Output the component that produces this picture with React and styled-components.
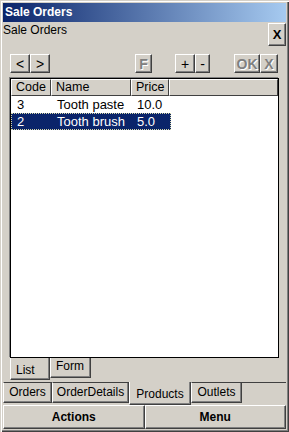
import React from 'react'
import styled, { createGlobalStyle } from 'styled-components'

const GlobalStyle = createGlobalStyle`
    html, body {
        margin: 0;
        padding: 0;
        background: #d4d0c8;
    }
    body {
        font-family: "Liberation Sans", Arial, sans-serif;
        font-size: 12px;
        color: #000;
    }
`

const products = [
    { code: '3', name: 'Tooth paste', price: '10.0' },
    { code: '2', name: 'Tooth brush', price: '5.0', selected: true },
]

const columns = [
    { title: 'Code', width: 40 },
    { title: 'Name', width: 80 },
    { title: 'Price', width: 38 },
]

const outerTabs = [
    { label: 'Orders', width: 49 },
    { label: 'OrderDetails', width: 77 },
    { label: 'Products', width: 62, active: true },
    { label: 'Outlets', width: 51 },
]

function App() {
    return (
        <>
            <GlobalStyle />
            <Window>
                <TitleBar>Sale Orders</TitleBar>
                <Client>
                    <HeaderRow>
                        <Caption>Sale Orders</Caption>
                        <CloseButton>X</CloseButton>
                    </HeaderRow>

                    <Toolbar>
                        <Group>
                            <ToolButton $w={20}>&lt;</ToolButton>
                            <ToolButton $w={20}>&gt;</ToolButton>
                        </Group>
                        <Group $ml={85}>
                            <ToolButton $w={17} disabled>F</ToolButton>
                        </Group>
                        <Group $ml={23}>
                            <ToolButton $w={20}>+</ToolButton>
                            <ToolButton $w={15}>-</ToolButton>
                        </Group>
                        <Group $ml={24}>
                            <ToolButton $w={26} disabled>OK</ToolButton>
                            <ToolButton $w={18} disabled>X</ToolButton>
                        </Group>
                    </Toolbar>

                    <Grid>
                        <GridHeader>
                            {columns.map(col => (
                                <HeaderCell key={col.title} $w={col.width}>{col.title}</HeaderCell>
                            ))}
                            <HeaderFiller />
                        </GridHeader>
                        <GridBody>
                            {products.map(p => (
                                <Row key={p.code} $selected={p.selected}>
                                    <Cell>{p.code}</Cell>
                                    <Cell>{p.name}</Cell>
                                    <Cell>{p.price}</Cell>
                                </Row>
                            ))}
                        </GridBody>
                    </Grid>

                    <InnerTabs>
                        <InnerTab $active>List</InnerTab>
                        <InnerTab>Form</InnerTab>
                    </InnerTabs>

                    <OuterTabs>
                        {outerTabs.map(t => (
                            <OuterTab key={t.label} $w={t.width} $active={t.active}>{t.label}</OuterTab>
                        ))}
                        <TabFiller />
                    </OuterTabs>

                    <ButtonBar>
                        <BarButton>Actions</BarButton>
                        <BarButton>Menu</BarButton>
                    </ButtonBar>
                </Client>
            </Window>
        </>
    )
}

export default App

const Window = styled.div`
    width: 289px;
    height: 432px;
    box-sizing: border-box;
    padding: 3px;
    display: flex;
    flex-direction: column;
    background: #d4d0c8;
    box-shadow: inset 1px 1px #d4d0c8, inset 2px 2px #fff,
        inset -1px -1px #404040, inset -2px -2px #808080;
`

const TitleBar = styled.div`
    height: 19px;
    line-height: 19px;
    padding-left: 2px;
    background: linear-gradient(to right, #0a246a, #a6caf0);
    color: #fff;
    font-weight: bold;
    font-size: 12px;
`

const Client = styled.div`
    flex: 1;
    display: flex;
    flex-direction: column;
    min-height: 0;
`

const HeaderRow = styled.div`
    height: 24px;
    display: flex;
    justify-content: space-between;
    align-items: flex-start;
`

const Caption = styled.div`
    font-size: 12px;
    line-height: 15px;
    padding-top: 1px;
`

const raised = `
    box-sizing: border-box;
    background: #d4d0c8;
    border: 1px solid;
    border-color: #fff #404040 #404040 #fff;
    box-shadow: inset -1px -1px #808080;
    font-family: "Liberation Sans", Arial, sans-serif;
    padding: 0;
    display: flex;
    align-items: center;
    justify-content: center;
`

const CloseButton = styled.div`
    ${raised}
    margin-top: 1px;
    width: 18px;
    height: 23px;
    font-weight: bold;
    font-size: 13px;
`

const Toolbar = styled.div`
    margin-top: 8px;
    height: 19px;
    display: flex;
    padding-left: 7px;
`

const Group = styled.div`
    display: flex;
    margin-left: ${p => p.$ml || 0}px;
`

const ToolButton = styled.div`
    ${raised}
    width: ${p => p.$w}px;
    height: 19px;
    font-size: 14px;
    color: ${p => (p.disabled ? '#808080' : '#000')};
    font-weight: ${p => (p.disabled ? 'bold' : 'normal')};
    text-shadow: ${p => (p.disabled ? '1px 1px 0 #fff' : 'none')};
`

const Grid = styled.div`
    margin: 5px 7px 0 7px;
    flex: 1;
    display: flex;
    flex-direction: column;
    background: #fff;
    border: 1px solid #000;
    box-shadow: -1px -1px 0 #808080;
    min-height: 0;
`

const GridHeader = styled.div`
    display: flex;
    height: 17px;
`

const HeaderCell = styled.div`
    box-sizing: border-box;
    width: ${p => p.$w}px;
    background: #d4d0c8;
    border-top: 1px solid #fff;
    border-left: 1px solid #fff;
    border-right: 1px solid #404040;
    border-bottom: 1px solid #404040;
    font-size: 12.5px;
    line-height: 15px;
    padding-left: 4px;
`

const HeaderFiller = styled(HeaderCell)`
    flex: 1;
`

const GridBody = styled.div`
    flex: 1;
    background: #fff;
`

const Row = styled.div`
    display: grid;
    grid-template-columns: ${columns.map(c => c.width + 'px').join(' ')};
    width: max-content;
    height: 17px;
    box-sizing: border-box;
    font-size: 13px;
    line-height: 15px;
    background: ${p => (p.$selected ? '#0a246a' : '#fff')};
    color: ${p => (p.$selected ? '#fff' : '#000')};
    border: 1px dotted ${p => (p.$selected ? '#d8d8a8' : 'transparent')};
`

const Cell = styled.div`
    padding-left: 5px;
    white-space: nowrap;
`

const InnerTabs = styled.div`
    height: 22px;
    display: flex;
    align-items: flex-start;
    padding-left: 7px;
    margin-bottom: 2px;
`

const InnerTab = styled.div`
    box-sizing: border-box;
    width: ${p => (p.$active ? 40 : 41)}px;
    height: ${p => (p.$active ? 22 : 20)}px;
    padding: ${p => (p.$active ? '6px 0 0 5px' : '2px 0 0 5px')};
    font-size: 12px;
    line-height: 13px;
    border-left: 1px solid #fff;
    border-right: 1px solid #404040;
    border-bottom: 1px solid #404040;
    box-shadow: inset -1px -1px #808080;
`

const OuterTabs = styled.div`
    height: 23px;
    display: flex;
    align-items: flex-start;
`

const OuterTab = styled.div`
    box-sizing: border-box;
    width: ${p => p.$w}px;
    height: ${p => (p.$active ? 23 : 21)}px;
    text-align: center;
    font-size: 12px;
    line-height: 13px;
    padding-top: ${p => (p.$active ? 6 : 3)}px;
    border-top: ${p => (p.$active ? 'none' : '1px solid #404040')};
    border-left: 1px solid #fff;
    border-right: 1px solid #404040;
    border-bottom: 1px solid #404040;
    box-shadow: inset -1px -1px #808080;
`

const TabFiller = styled.div`
    flex: 1;
    border-top: 1px solid #404040;
`

const ButtonBar = styled.div`
    display: flex;
    height: 24px;
`

const BarButton = styled.div`
    ${raised}
    flex: 1;
    height: 24px;
    font-weight: bold;
    font-size: 12px;
`
